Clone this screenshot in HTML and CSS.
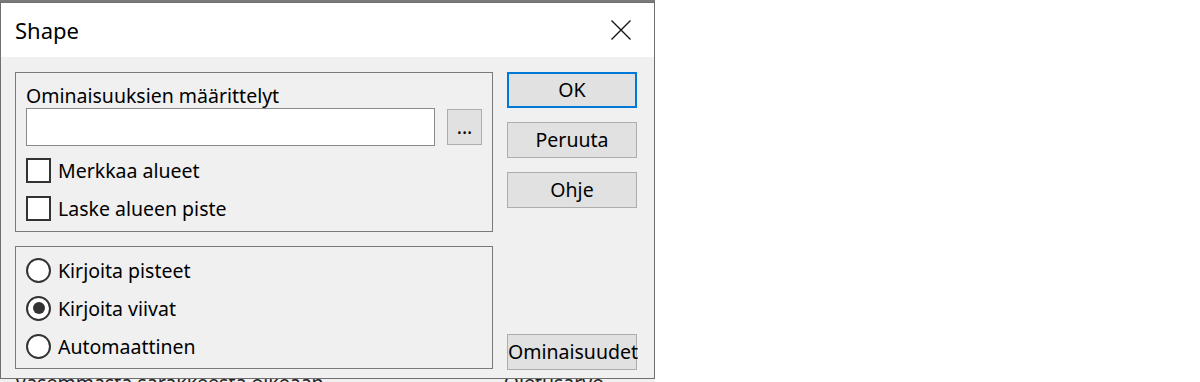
FILE: index.html
```html
<!DOCTYPE html>
<html lang="fi">
<head>
    <meta charset="UTF-8">
    <title>Shape</title>
    <link rel="stylesheet" href="styles.css">
</head>
<body>
<div class="desk">
    <div class="under-top"></div>
    <div class="dialog">
        <div class="titlebar">
            <span class="title">Shape</span>
            <svg class="close" width="20" height="20" viewBox="0 0 20 20">
                <path d="M0.5 0.5 L19.5 19.5 M19.5 0.5 L0.5 19.5" stroke="#111" stroke-width="1.3" fill="none"/>
            </svg>
        </div>
        <div class="content">
            <div class="left">
                <div class="group group-top">
                    <div class="label">Ominaisuuksien määrittelyt</div>
                    <div class="input-row">
                        <div class="textbox"></div>
                        <button class="btn btn-browse">...</button>
                    </div>
                    <div class="options">
                        <div class="option"><span class="check"></span>Merkkaa alueet</div>
                        <div class="option"><span class="check"></span>Laske alueen piste</div>
                    </div>
                </div>
                <div class="group group-bottom">
                    <div class="option"><span class="radio"></span>Kirjoita pisteet</div>
                    <div class="option"><span class="radio checked"></span>Kirjoita viivat</div>
                    <div class="option"><span class="radio"></span>Automaattinen</div>
                </div>
            </div>
            <div class="buttons">
                <button class="btn btn-default">OK</button>
                <button class="btn">Peruuta</button>
                <button class="btn">Ohje</button>
                <button class="btn btn-last">Ominaisuudet</button>
            </div>
        </div>
    </div>
    <div class="under-bottom">
        <span class="under-text">Vasemmasta sarakkeesta oikeaan</span>
        <span class="under-text under-right">Oletusarvo</span>
    </div>
</div>
</body>
</html>
```

FILE: styles.css
```css
body {
    margin: 0;
    background: #fff;
    font-family: 'Noto Sans', sans-serif;
    color: #000;
}
.desk {
    width: 655px;
    background: #7a7a7a;
}
.under-top {
    height: 2px;
    background: #7a7a7a;
}
.dialog {
    border: 1px solid #6f6f6f;
    background: #f0f0f0;
}
.titlebar {
    height: 54px;
    background: #fff;
    display: flex;
    align-items: center;
    justify-content: space-between;
    padding: 0 23px 0 14px;
}
.title {
    font-size: 22px;
}
.close {
    display: block;
    margin-top: -1px;
}
.content {
    display: flex;
    gap: 14px;
    padding: 15px 17px 9px 14px;
}
.left {
    display: flex;
    flex-direction: column;
    gap: 14px;
}
.group {
    width: 456px;
    border: 1px solid #7a7a7a;
    padding: 0 10px;
    font-size: 19.5px;
}
.group-top {
    padding-top: 11px;
    padding-bottom: 4px;
}
.group-bottom {
    padding-top: 4px;
    padding-bottom: 3px;
}
.label {
    height: 24px;
    line-height: 24px;
    white-space: nowrap;
}
.input-row {
    display: flex;
    align-items: center;
    gap: 12px;
    height: 38px;
}
.textbox {
    width: 407px;
    height: 36px;
    background: #fff;
    border: 1px solid #8a8a8a;
}
.options {
    margin-top: 5px;
}
.option {
    display: flex;
    align-items: center;
    height: 38px;
    white-space: nowrap;
}
.check {
    width: 21px;
    height: 21px;
    border: 2px solid #333;
    background: #fff;
    margin-right: 7px;
}
.radio {
    width: 21px;
    height: 21px;
    border: 2px solid #333;
    border-radius: 50%;
    background: #fff;
    margin-right: 7px;
    display: flex;
    align-items: center;
    justify-content: center;
}
.radio.checked::after {
    content: '';
    width: 12px;
    height: 12px;
    border-radius: 50%;
    background: #333;
}
.btn {
    font-family: 'Noto Sans', sans-serif;
    font-size: 19.5px;
    color: #000;
    background: #e1e1e1;
    border: 1px solid #adadad;
    margin: 0;
    padding: 0;
    height: 36px;
    line-height: 32px;
    white-space: nowrap;
}
.btn-browse {
    width: 35px;
    height: 36px;
    line-height: 26px;
}
.buttons {
    display: flex;
    flex-direction: column;
    gap: 14px;
    width: 130px;
}
.buttons .btn {
    width: 130px;
}
.btn-default {
    border: 2px solid #0078d7;
}
.btn-last {
    margin-top: auto;
    margin-bottom: -1px;
}
.under-bottom {
    height: 3px;
    overflow: hidden;
    background: #f0f0f0;
    display: flex;
    font-size: 19.5px;
    line-height: 20px;
    color: #222;
}
.under-text {
    margin-top: -6px;
    padding-left: 15px;
}
.under-right {
    padding-left: 180px;
}
```
